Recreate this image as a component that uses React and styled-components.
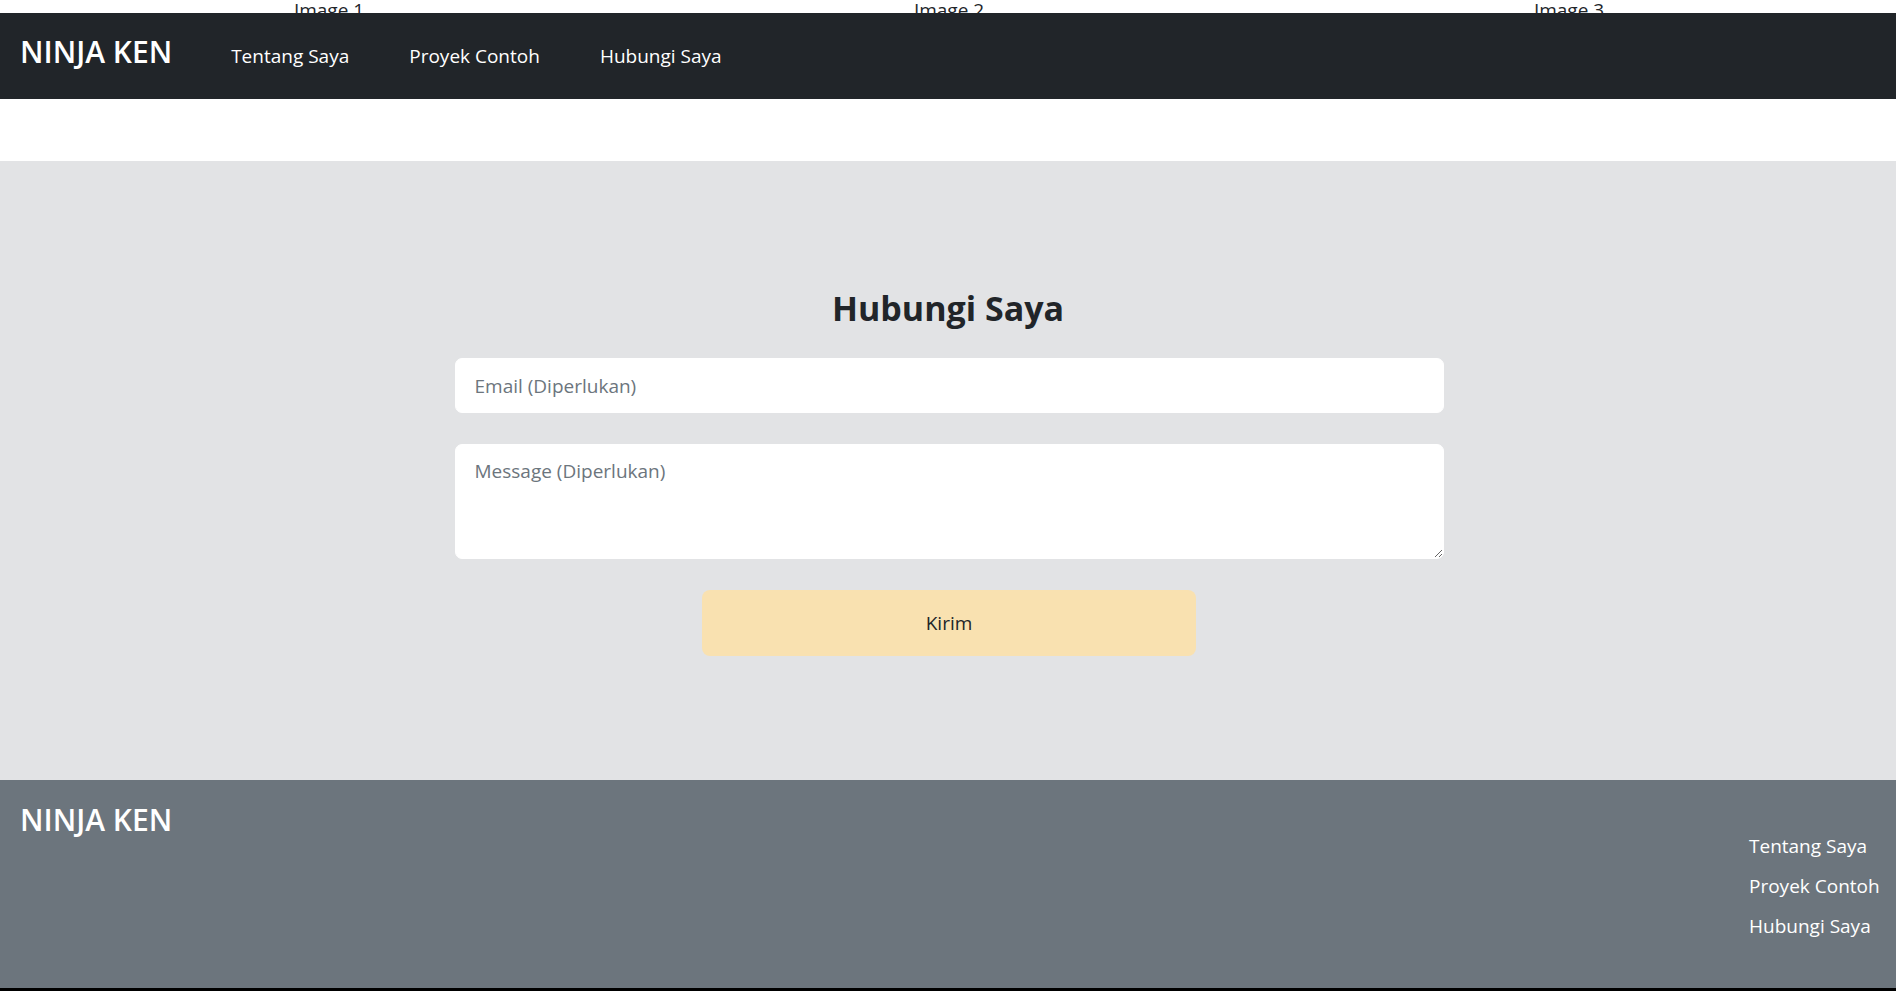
import React from "react";
import styled, { createGlobalStyle } from "styled-components";

const GlobalStyle = createGlobalStyle`
  html, body { margin: 0; padding: 0; background: #ffffff; }
  body {
    font-family: "Open Sans", "Noto Sans", "Liberation Sans", sans-serif;
    color: #212529;
    -webkit-font-smoothing: antialiased;
  }
  * { box-sizing: border-box; }
`;

const Page = styled.div`
  display: flex;
  flex-direction: column;
  min-height: 991px;
`;

const CaptionRow = styled.div`
  display: grid;
  grid-template-columns: repeat(3, 1fr);
  height: 13px;
  overflow: hidden;
  padding: 0 17px 0 19px;
  align-items: end;
`;

const Caption = styled.div`
  text-align: center;
  font-size: 19px;
  line-height: 20px;
  margin-bottom: -2px;
  color: #212529;
`;

const Navbar = styled.nav`
  display: flex;
  align-items: center;
  height: 86px;
  padding: 0 20px;
  background: #212529;
  gap: 59px;
`;

const Brand = styled.a`
  color: #ffffff;
  font-size: 30px;
  font-weight: 600;
  line-height: 1.2;
  padding-bottom: 8px;
  text-decoration: none;
  white-space: nowrap;
`;

const NavLinks = styled.ul`
  display: flex;
  gap: 60px;
  margin: 0;
  padding: 0;
  list-style: none;
`;

const NavLink = styled.a`
  display: block;
  color: #ffffff;
  font-size: 19px;
  line-height: 30px;
  text-decoration: none;
  white-space: nowrap;
`;

const ContactSection = styled.section`
  margin-top: 62px;
  background: #e2e3e5;
  padding: 128px 0 124px;
`;

const Heading = styled.h2`
  margin: 0 0 31px;
  text-align: center;
  font-size: 34px;
  font-weight: 700;
  line-height: 38px;
  color: #212529;
`;

const Form = styled.form`
  display: flex;
  flex-direction: column;
  align-items: center;
  gap: 31px;
  width: 989px;
  margin: 0 auto;
  padding-left: 2px;
  box-sizing: content-box;
`;

const fieldStyles = `
  width: 100%;
  border: 1px solid #ffffff;
  border-radius: 7px;
  background: #ffffff;
  font-family: "Open Sans", "Noto Sans", sans-serif;
  font-size: 19px;
  line-height: 30px;
  padding: 11px 19px;
  color: #212529;
  outline: none;
  &::placeholder { color: #6c757d; opacity: 1; }
`;

const Input = styled.input`
  ${fieldStyles}
  height: 55px;
`;

const TextArea = styled.textarea`
  ${fieldStyles}
  height: 115px;
  resize: vertical;
  display: block;
`;

const SubmitButton = styled.button`
  width: 494px;
  height: 66px;
  border: none;
  border-radius: 8px;
  background: #f9e1b0;
  color: #212529;
  font-family: "Open Sans", "Noto Sans", sans-serif;
  font-size: 19px;
  cursor: pointer;
`;

const Footer = styled.footer`
  display: flex;
  justify-content: space-between;
  align-items: flex-start;
  background: #6c757d;
  padding: 22px 17px 40px 20px;
  border-bottom: 3px solid #000000;
  flex: 1;
`;

const FooterBrand = styled.div`
  color: #ffffff;
  font-size: 30px;
  font-weight: 600;
  line-height: 1.2;
`;

const FooterLinks = styled.ul`
  list-style: none;
  margin: 24px 0 0;
  padding: 0;
  width: 130px;
`;

const FooterLink = styled.a`
  display: block;
  padding: 5px 0;
  color: #ffffff;
  font-size: 19px;
  line-height: 30px;
  text-decoration: none;
  white-space: nowrap;
`;

const links = ["Tentang Saya", "Proyek Contoh", "Hubungi Saya"];

export default function App() {
  return (
    <>
      <GlobalStyle />
      <Page>
        <CaptionRow>
          <Caption>Image 1</Caption>
          <Caption>Image 2</Caption>
          <Caption>Image 3</Caption>
        </CaptionRow>
        <Navbar>
          <Brand href="#">NINJA KEN</Brand>
          <NavLinks>
            {links.map((l) => (
              <li key={l}>
                <NavLink href="#">{l}</NavLink>
              </li>
            ))}
          </NavLinks>
        </Navbar>
        <ContactSection>
          <Heading>Hubungi Saya</Heading>
          <Form onSubmit={(e) => e.preventDefault()}>
            <Input type="email" placeholder="Email (Diperlukan)" />
            <TextArea placeholder="Message (Diperlukan)" rows={3} />
            <SubmitButton type="submit">Kirim</SubmitButton>
          </Form>
        </ContactSection>
        <Footer>
          <FooterBrand>NINJA KEN</FooterBrand>
          <FooterLinks>
            {links.map((l) => (
              <li key={l}>
                <FooterLink href="#">{l}</FooterLink>
              </li>
            ))}
          </FooterLinks>
        </Footer>
      </Page>
    </>
  );
}
